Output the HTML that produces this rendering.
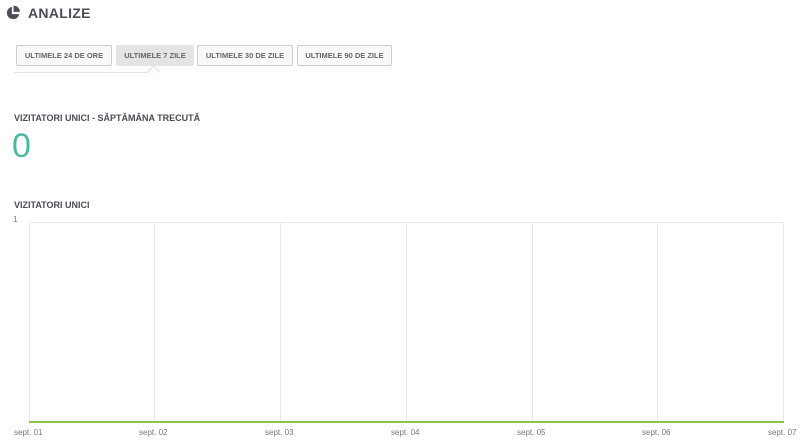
<!DOCTYPE html>
<html><head><style>
body{margin:0;width:811px;height:444px;background:#fff;font-family:"Liberation Sans",sans-serif;position:relative;overflow:hidden;color:#4a4d55}
.a{position:absolute}
.btn{position:absolute;top:45px;height:19px;border:1px solid #ccc;border-radius:2px;background:#f9f9f9;font-size:7.5px;font-weight:bold;color:#666;line-height:19px;text-align:center;box-sizing:content-box}
.v{position:absolute;top:222px;width:1px;height:200px;background:#e8e8e8}
.xl{position:absolute;top:428px;font-size:8px;color:#777}
</style></head><body>
<svg class="a" style="left:5px;top:5px" width="16" height="16" viewBox="0 0 14 14"><path d="M6 1.5A5.5 5.5 0 1 0 12.5 8H6Z" fill="#4a4d55"/><path d="M7.5 0.5A5.5 5.5 0 0 1 13 6H7.5Z" fill="#4a4d55"/></svg>
<div class="a" style="left:28px;top:5px;font-size:14px;font-weight:bold;letter-spacing:.3px">ANALIZE</div>
<div class="btn" style="left:16px;width:94px">ULTIMELE 24 DE ORE</div>
<div class="btn" style="left:116px;width:76px;background:#e4e4e6;border-color:#e4e4e6">ULTIMELE 7 ZILE</div>
<div class="btn" style="left:197px;width:94px">ULTIMELE 30 DE ZILE</div>
<div class="btn" style="left:297px;width:93px">ULTIMELE 90 DE ZILE</div>
<div class="a" style="left:14px;top:72px;width:133px;height:1px;background:#e2e2e2"></div>
<svg class="a" style="left:146px;top:65px" width="16" height="8"><path d="M0 7.5H1L7.5 1L14 7.5" fill="none" stroke="#ddd" stroke-width="1"/></svg>
<div class="a" style="left:14px;top:113px;font-size:9px;font-weight:bold">VIZITATORI UNICI - SĂPTĂMÂNA TRECUTĂ</div>
<div class="a" style="left:12px;top:128px;font-size:34px;color:#4fb8a4;line-height:36px">0</div>
<div class="a" style="left:14px;top:200px;font-size:9px;font-weight:bold">VIZITATORI UNICI</div>
<div class="a" style="left:13px;top:215px;font-size:8px;color:#777">1</div>
<div class="a" style="left:29px;top:222px;width:755px;height:1px;background:#ececec"></div>
<div class="v" style="left:29px"></div><div class="v" style="left:154px"></div><div class="v" style="left:280px"></div><div class="v" style="left:406px"></div><div class="v" style="left:532px"></div><div class="v" style="left:657px"></div><div class="v" style="left:783px"></div>
<div class="a" style="left:29px;top:421px;width:755px;height:2px;background:#8cc152"></div>
<div class="xl" style="left:14px">sept. 01</div>
<div class="xl" style="left:139px">sept. 02</div>
<div class="xl" style="left:265px">sept. 03</div>
<div class="xl" style="left:391px">sept. 04</div>
<div class="xl" style="left:517px">sept. 05</div>
<div class="xl" style="left:642px">sept. 06</div>
<div class="xl" style="left:768px">sept. 07</div>
</body></html>
